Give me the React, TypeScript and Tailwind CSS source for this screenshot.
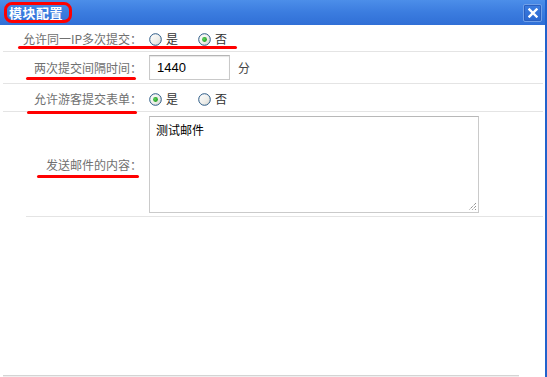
import React from "react";

const font = { fontFamily: '"Noto Sans CJK SC", "Noto Sans", sans-serif' };

function Radio({ checked }: { checked?: boolean }) {
  return (
    <svg width="13" height="13" viewBox="0 0 13 13" className="shrink-0">
      <defs>
        <linearGradient id="rg" x1="0" y1="0" x2="1" y2="1">
          <stop offset="0" stopColor="#ffffff" />
          <stop offset="0.6" stopColor="#eeeeea" />
          <stop offset="1" stopColor="#d2d2cc" />
        </linearGradient>
        <radialGradient id="dot" cx="0.4" cy="0.4" r="0.6">
          <stop offset="0" stopColor="#5fd45f" />
          <stop offset="1" stopColor="#1d9b1d" />
        </radialGradient>
      </defs>
      <circle cx="6.5" cy="6.5" r="5.8" fill="url(#rg)" stroke="#2b5a85" strokeWidth="1" />
      {checked && <circle cx="6.5" cy="6.5" r="2.4" fill="url(#dot)" />}
    </svg>
  );
}

function RadioOpt({ label, checked }: { label: string; checked?: boolean }) {
  return (
    <span className="flex items-center gap-[4px] text-[12px] text-[#333]">
      <Radio checked={checked} />
      <span>{label}</span>
    </span>
  );
}

export default function App() {
  return (
    <div
      className="relative w-[547px] h-[377px] bg-white overflow-hidden flex flex-col border-r-2 border-[#2262cc]"
      style={font}
    >
      {/* Title bar */}
      <div className="h-[25px] shrink-0 flex items-center justify-between pl-[9px] pr-[3px] bg-gradient-to-b from-[#4c8ee9] via-[#3b7cdf] to-[#306fd6]">
        <span className="text-white font-bold text-[13px] leading-none tracking-[0.5px]">模块配置</span>
        <button className="w-[19px] h-[18px] flex items-center justify-center rounded-[2px] border border-[#6f9fe8] bg-gradient-to-b from-[#3c7de0] to-[#2b68d0] shadow-[inset_0_0_0_1px_#2a5fbf]">
          <svg width="10" height="10" viewBox="0 0 10 10">
            <path d="M1.5 1.5 L8.5 8.5 M8.5 1.5 L1.5 8.5" stroke="white" strokeWidth="2.4" strokeLinecap="square" />
          </svg>
        </button>
      </div>

      {/* Rows */}
      <div className="flex flex-col pl-[3px] pr-[2px]">
        <div className="h-[27px] flex items-center border-b border-[#e4e4e4]">
          <div className="w-[139px] text-right text-[12px] text-[#707070] pt-[2px]">允许同一IP多次提交：</div>
          <div className="ml-[7px] flex items-center gap-[20px] pt-[2px]">
            <RadioOpt label="是" />
            <RadioOpt label="否" checked />
          </div>
        </div>
        <div className="h-[32px] flex items-center border-b border-[#e4e4e4]">
          <div className="w-[139px] text-right text-[12px] text-[#707070]">两次提交间隔时间：</div>
          <div className="ml-[7px] flex items-center">
            <div
              className="w-[81px] h-[25px] border border-[#c9c9c9] border-t-[#b5b5b5] flex items-center pl-[7px] text-[13px] text-black shadow-[inset_0_1px_1px_#e6e6e6]"
              style={{ fontFamily: '"Liberation Sans", Arial, sans-serif' }}
            >
              1440
            </div>
            <span className="ml-[8px] text-[12px] text-[#444]">分</span>
          </div>
        </div>
        <div className="h-[28px] flex items-center border-b border-[#e4e4e4]">
          <div className="w-[139px] text-right text-[12px] text-[#707070] pt-[3px]">允许游客提交表单：</div>
          <div className="ml-[7px] flex items-center gap-[20px] pt-[3px]">
            <RadioOpt label="是" checked />
            <RadioOpt label="否" />
          </div>
        </div>
        <div className="h-[105px] flex items-center border-b border-[#e4e4e4] ml-[23px]">
          <div className="w-[116px] text-right text-[12px] text-[#707070] pt-[1px]">发送邮件的内容：</div>
          <div className="ml-[7px] relative">
            <div className="w-[330px] h-[97px] border border-[#cacaca] border-t-[#b8b8b8] pl-[6px] pt-[4px] text-[12px] text-black">
              测试邮件
            </div>
            <svg width="10" height="10" viewBox="0 0 10 10" className="absolute right-[2px] bottom-[2px]">
              <path d="M9 2 L2 9 M9 5 L5 9 M9 8 L8 9" stroke="#666" strokeWidth="1" strokeDasharray="1 1" />
            </svg>
          </div>
        </div>
      </div>

      <div className="flex-1" />
      <div className="ml-[3px] w-[516px] h-[1px] bg-[#d4d4d4]" />
      <div className="ml-[3px] w-[516px] h-[1px] bg-[#efefef]" />

      {/* Red annotations */}
      <div className="absolute left-[4px] top-[2px] w-[68px] h-[21px] border-[3px] border-[#f00] rounded-[8px] pointer-events-none" />
      <div className="absolute left-[18px] top-[46px] w-[219px] h-[3px] bg-[#f00] rounded-full" />
      <div className="absolute left-[26px] top-[77px] w-[110px] h-[3px] bg-[#f00] rounded-full" />
      <div className="absolute left-[27px] top-[111px] w-[110px] h-[3px] bg-[#f00] rounded-full" />
      <div className="absolute left-[37px] top-[175px] w-[102px] h-[3px] bg-[#f00] rounded-full" />
    </div>
  );
}
